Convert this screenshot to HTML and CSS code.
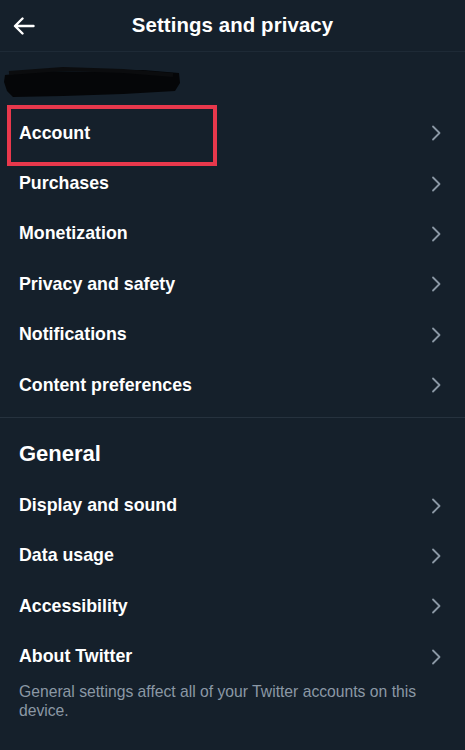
FILE: index.html
```html
<!DOCTYPE html>
<html>
<head>
<meta charset="utf-8">
<link rel="stylesheet" href="styles.css">
</head>
<body>
<div class="app">
  <header class="topbar">
    <svg class="back" width="22" height="18" viewBox="0 0 22 18"><path d="M20.5 9H2.5M9.5 1.5L2 9l7.5 7.5" fill="none" stroke="#fff" stroke-width="2.4" stroke-linecap="round" stroke-linejoin="round"/></svg>
    <h1 class="title">Settings and privacy</h1>
  </header>
  <div class="redact">
    <svg width="180" height="32" viewBox="0 0 180 32"><path d="M2 8 L40 4 L90 5 L140 3 L176 6 L177 16 L172 24 L120 27 L60 29 L10 30 L4 24 L1 15 Z" fill="#050608"/><path d="M6 6 L60 2 L120 4 L170 8" stroke="#0b0c0e" stroke-width="4" fill="none"/></svg>
  </div>
  <section class="section first">
    <div class="highlight"></div>
    <div class="row"><span>Account</span><svg class="chev" width="10" height="16" viewBox="0 0 10 16"><path d="M2 1.5L8.5 8 2 14.5" fill="none" stroke="#8b98a5" stroke-width="1.8" stroke-linecap="round" stroke-linejoin="round"/></svg></div>
    <div class="row"><span>Purchases</span><svg class="chev" width="10" height="16" viewBox="0 0 10 16"><path d="M2 1.5L8.5 8 2 14.5" fill="none" stroke="#8b98a5" stroke-width="1.8" stroke-linecap="round" stroke-linejoin="round"/></svg></div>
    <div class="row"><span>Monetization</span><svg class="chev" width="10" height="16" viewBox="0 0 10 16"><path d="M2 1.5L8.5 8 2 14.5" fill="none" stroke="#8b98a5" stroke-width="1.8" stroke-linecap="round" stroke-linejoin="round"/></svg></div>
    <div class="row"><span>Privacy and safety</span><svg class="chev" width="10" height="16" viewBox="0 0 10 16"><path d="M2 1.5L8.5 8 2 14.5" fill="none" stroke="#8b98a5" stroke-width="1.8" stroke-linecap="round" stroke-linejoin="round"/></svg></div>
    <div class="row"><span>Notifications</span><svg class="chev" width="10" height="16" viewBox="0 0 10 16"><path d="M2 1.5L8.5 8 2 14.5" fill="none" stroke="#8b98a5" stroke-width="1.8" stroke-linecap="round" stroke-linejoin="round"/></svg></div>
    <div class="row"><span>Content preferences</span><svg class="chev" width="10" height="16" viewBox="0 0 10 16"><path d="M2 1.5L8.5 8 2 14.5" fill="none" stroke="#8b98a5" stroke-width="1.8" stroke-linecap="round" stroke-linejoin="round"/></svg></div>
  </section>
  <section class="section">
    <h2 class="heading">General</h2>
    <div class="row"><span>Display and sound</span><svg class="chev" width="10" height="16" viewBox="0 0 10 16"><path d="M2 1.5L8.5 8 2 14.5" fill="none" stroke="#8b98a5" stroke-width="1.8" stroke-linecap="round" stroke-linejoin="round"/></svg></div>
    <div class="row"><span>Data usage</span><svg class="chev" width="10" height="16" viewBox="0 0 10 16"><path d="M2 1.5L8.5 8 2 14.5" fill="none" stroke="#8b98a5" stroke-width="1.8" stroke-linecap="round" stroke-linejoin="round"/></svg></div>
    <div class="row"><span>Accessibility</span><svg class="chev" width="10" height="16" viewBox="0 0 10 16"><path d="M2 1.5L8.5 8 2 14.5" fill="none" stroke="#8b98a5" stroke-width="1.8" stroke-linecap="round" stroke-linejoin="round"/></svg></div>
    <div class="row"><span>About Twitter</span><svg class="chev" width="10" height="16" viewBox="0 0 10 16"><path d="M2 1.5L8.5 8 2 14.5" fill="none" stroke="#8b98a5" stroke-width="1.8" stroke-linecap="round" stroke-linejoin="round"/></svg></div>
    <p class="note">General settings affect all of your Twitter accounts on this device.</p>
  </section>
</div>
</body>
</html>
```

FILE: styles.css
```css
* { box-sizing: border-box; }
html, body {
  margin: 0;
  padding: 0;
  background: #15202b;
}
body {
  font-family: "Liberation Sans", Arial, sans-serif;
  color: #ffffff;
}
.app {
  width: 465px;
  height: 750px;
  background: #15202b;
  overflow: hidden;
}
.topbar {
  height: 52px;
  display: flex;
  align-items: center;
  justify-content: center;
  position: relative;
  border-bottom: 1px solid #1e2a36;
}
.back {
  position: absolute;
  left: 13px;
  top: 17px;
}
.title {
  margin: 0;
  font-size: 20.4px;
  font-weight: 700;
  letter-spacing: 0.1px;
}
.redact {
  height: 56px;
  padding: 15px 0 0 3px;
}
.redact svg { display: block; }
.section {
  position: relative;
}
.section.first {
  padding-bottom: 7px;
  border-bottom: 1px solid #26323e;
}
.highlight {
  position: absolute;
  left: 7px;
  top: -3px;
  width: 210px;
  height: 61px;
  border: 4px solid #e8384c;
  pointer-events: none;
}
.row {
  height: 50.4px;
  display: flex;
  align-items: center;
  justify-content: space-between;
  padding: 0 24px 0 19px;
  font-size: 17.8px;
  font-weight: 700;
}
.chev { display: block; }
.heading {
  margin: 0;
  padding: 22px 19px 12px;
  font-size: 22px;
  line-height: 28px;
  font-weight: 700;
}
.note {
  margin: 0;
  padding: 0 19px;
  font-size: 15.7px;
  line-height: 19px;
  color: #8b98a5;
}
```
